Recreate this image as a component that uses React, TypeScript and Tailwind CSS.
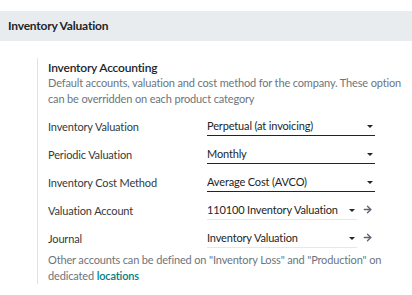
import { ArrowRight } from "lucide-react";

type Row = {
  label: string;
  value: string;
  link?: boolean;
};

const rows: Row[] = [
  { label: "Inventory Valuation", value: "Perpetual (at invoicing)" },
  { label: "Periodic Valuation", value: "Monthly" },
  { label: "Inventory Cost Method", value: "Average Cost (AVCO)" },
  { label: "Valuation Account", value: "110100 Inventory Valuation", link: true },
  { label: "Journal", value: "Inventory Valuation", link: true },
];

function Caret() {
  return (
    <span className="mb-[6px] inline-block h-0 w-0 border-x-[3px] border-t-[3px] border-x-transparent border-t-[#212529]" />
  );
}

function Field({ row }: { row: Row }) {
  if (row.link) {
    return (
      <div className="flex items-end">
        <div className="flex h-[24px] w-[150px] items-end justify-between border-b border-[#e5e7eb] pb-[1px] pr-[2px] leading-[16px]">
          <span className="whitespace-nowrap">{row.value}</span>
          <Caret />
        </div>
        <ArrowRight size={11} strokeWidth={3} className="mb-[5px] ml-[5px] text-[#5f636f]" />
      </div>
    );
  }
  return (
    <div className="flex h-[24px] w-[168px] items-end justify-between border-b border-[#212529] pb-[1px] pr-[2px] leading-[16px]">
      <span className="whitespace-nowrap">{row.value}</span>
      <Caret />
    </div>
  );
}

export default function App() {
  return (
    <div className="h-[295px] w-[412px] bg-white pt-[11px] font-['Lato',sans-serif] text-[11px] tracking-[-0.15px] text-[#212529]">
      <div className="flex h-[30px] items-center bg-[#e9ecef] px-2 text-[12px] font-bold tracking-[-0.2px]">
        Inventory Valuation
      </div>

      <div className="ml-[37px] mt-[17px] border-l border-[#dee2e6] pl-[10px] pr-3">
        <div className="pt-[3px] text-[12px] font-semibold leading-[14px] tracking-[-0.2px]">
          Inventory Accounting
        </div>
        <div className="leading-[16px] text-[#6c757d]">
          <span className="block whitespace-nowrap">
            Default accounts, valuation and cost method for the company. These option
          </span>
          <span className="block whitespace-nowrap">can be overridden on each product category</span>
        </div>

        <div className="mt-[5px] flex flex-col">
          {rows.map((row) => (
            <div key={row.label} className="grid h-[28px] grid-cols-[159px_1fr] items-start">
              <div className="pt-[7px] leading-[16px] text-[#343a40]">{row.label}</div>
              <Field row={row} />
            </div>
          ))}
        </div>

        <div className="leading-[16px] text-[#6c757d]">
          <span className="block whitespace-nowrap">
            Other accounts can be defined on "Inventory Loss" and "Production" on
          </span>
          <span className="block whitespace-nowrap">
            dedicated <span className="font-semibold text-[#017e84]">locations</span>
          </span>
        </div>
      </div>
    </div>
  );
}
